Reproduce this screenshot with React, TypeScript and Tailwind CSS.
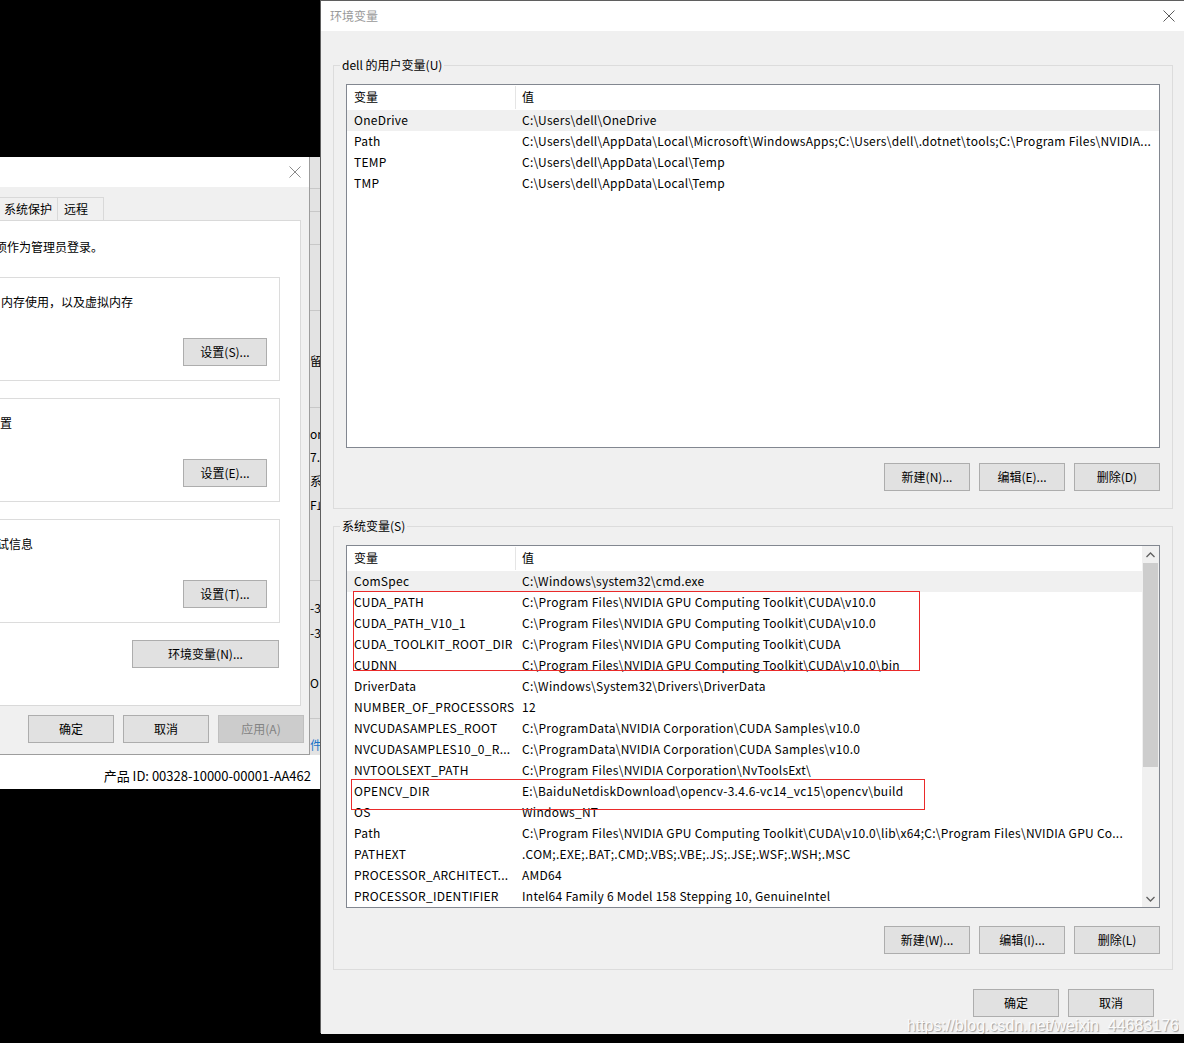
import React from 'react';

type Row = [string, string];

const userVars: Row[] = [
  ['OneDrive', 'C:\\Users\\dell\\OneDrive'],
  ['Path', 'C:\\Users\\dell\\AppData\\Local\\Microsoft\\WindowsApps;C:\\Users\\dell\\.dotnet\\tools;C:\\Program Files\\NVIDIA...'],
  ['TEMP', 'C:\\Users\\dell\\AppData\\Local\\Temp'],
  ['TMP', 'C:\\Users\\dell\\AppData\\Local\\Temp'],
];

const sysVars: Row[] = [
  ['ComSpec', 'C:\\Windows\\system32\\cmd.exe'],
  ['CUDA_PATH', 'C:\\Program Files\\NVIDIA GPU Computing Toolkit\\CUDA\\v10.0'],
  ['CUDA_PATH_V10_1', 'C:\\Program Files\\NVIDIA GPU Computing Toolkit\\CUDA\\v10.0'],
  ['CUDA_TOOLKIT_ROOT_DIR', 'C:\\Program Files\\NVIDIA GPU Computing Toolkit\\CUDA'],
  ['CUDNN', 'C:\\Program Files\\NVIDIA GPU Computing Toolkit\\CUDA\\v10.0\\bin'],
  ['DriverData', 'C:\\Windows\\System32\\Drivers\\DriverData'],
  ['NUMBER_OF_PROCESSORS', '12'],
  ['NVCUDASAMPLES_ROOT', 'C:\\ProgramData\\NVIDIA Corporation\\CUDA Samples\\v10.0'],
  ['NVCUDASAMPLES10_0_R...', 'C:\\ProgramData\\NVIDIA Corporation\\CUDA Samples\\v10.0'],
  ['NVTOOLSEXT_PATH', 'C:\\Program Files\\NVIDIA Corporation\\NvToolsExt\\'],
  ['OPENCV_DIR', 'E:\\BaiduNetdiskDownload\\opencv-3.4.6-vc14_vc15\\opencv\\build'],
  ['OS', 'Windows_NT'],
  ['Path', 'C:\\Program Files\\NVIDIA GPU Computing Toolkit\\CUDA\\v10.0\\lib\\x64;C:\\Program Files\\NVIDIA GPU Co...'],
  ['PATHEXT', '.COM;.EXE;.BAT;.CMD;.VBS;.VBE;.JS;.JSE;.WSF;.WSH;.MSC'],
  ['PROCESSOR_ARCHITECT...', 'AMD64'],
  ['PROCESSOR_IDENTIFIER', 'Intel64 Family 6 Model 158 Stepping 10, GenuineIntel'],
];

const CloseX = ({ color }: { color: string }) => (
  <svg width="12" height="12" viewBox="0 0 12 12">
    <path d="M0.5 0.5L11.5 11.5M11.5 0.5L0.5 11.5" stroke={color} strokeWidth="1" fill="none" />
  </svg>
);

const Btn = ({ label, className = '' }: { label: string; className?: string }) => (
  <div className={`w-[86px] h-[28px] flex items-center justify-center border border-[#adadad] bg-[#e1e1e1] ${className}`}>
    {label}
  </div>
);

const Header = () => (
  <div className="flex h-[25px] bg-white shrink-0">
    <div className="w-[168px] pl-[7px] pb-[2px] flex items-center">变量</div>
    <div className="w-[1px] bg-[#e5e5e5] my-[1px]" />
    <div className="flex-1 pl-[6px] pb-[2px] flex items-center">值</div>
  </div>
);

const VarRow = ({ row, selected }: { row: Row; selected: boolean }) => (
  <div className={`flex h-[21px] pb-[2px] items-center whitespace-nowrap tracking-[0.27px] ${selected ? 'bg-[#f0f0f0]' : ''}`}>
    <div className="w-[169px] pl-[7px] overflow-hidden">{row[0]}</div>
    <div className="flex-1 pl-[6px] overflow-hidden">{row[1]}</div>
  </div>
);

const Chevron = ({ up }: { up: boolean }) => (
  <svg width="9" height="6" viewBox="0 0 9 6">
    <path d={up ? 'M0.5 5L4.5 1L8.5 5' : 'M0.5 1L4.5 5L8.5 1'} stroke="#606060" strokeWidth="1.3" fill="none" />
  </svg>
);

// the grey sliver of the window that sits behind 系统属性
const BehindStrip = () => (
  <div className="w-[10px] bg-[#e3e3e3] flex flex-col overflow-hidden whitespace-nowrap text-[12px] leading-[16px]">
    <div className="h-[32px] border-b border-[#c8c8c8] shrink-0" />
    <div className="h-[23px] border-b border-[#c8c8c8] shrink-0" />
    <div className="h-[33px] border-b border-[#c8c8c8] shrink-0" />
    <div className="h-[66px] border-b border-[#c8c8c8] shrink-0" />
    <div className="h-[42px] shrink-0" />
    <div className="h-[16px] shrink-0">留</div>
    <div className="h-[39px] border-b border-[#c8c8c8] shrink-0" />
    <div className="h-[18px] shrink-0" />
    <div className="h-[16px] shrink-0">or</div>
    <div className="h-[7px] shrink-0" />
    <div className="h-[16px] shrink-0">7.8</div>
    <div className="h-[8px] shrink-0" />
    <div className="h-[16px] shrink-0">系</div>
    <div className="h-[8px] shrink-0" />
    <div className="h-[16px] shrink-0">F止</div>
    <div className="h-[68px] border-b border-[#c8c8c8] shrink-0" />
    <div className="h-[19px] shrink-0" />
    <div className="h-[16px] shrink-0">-3</div>
    <div className="h-[9px] shrink-0" />
    <div className="h-[16px] shrink-0">-3</div>
    <div className="h-[34px] shrink-0" />
    <div className="h-[16px] shrink-0">O</div>
    <div className="h-[28px] border-b border-[#c8c8c8] shrink-0" />
    <div className="h-[18px] shrink-0" />
    <div className="h-[16px] shrink-0 text-[#1a73c8]">件</div>
  </div>
);

const SettingBox = ({ text, label, textClass }: { text: string; label: string; textClass: string }) => (
  <div className="w-[280px] h-[104px] border border-l-0 border-[#dcdcdc] flex flex-col shrink-0">
    <div className={`mt-[16px] leading-[16px] whitespace-nowrap ${textClass}`}>{text}</div>
    <div className="flex justify-end pr-[12px] mt-[28px]">
      <div className="w-[84px] h-[28px] flex items-center justify-center border border-[#adadad] bg-[#e1e1e1]">{label}</div>
    </div>
  </div>
);

const SystemProps = () => (
  <div className="w-[310px] flex flex-col border-r border-b border-[#9d9d9d]">
    <div className="h-[30px] bg-white flex items-center justify-end pr-[8px] shrink-0">
      <CloseX color="#8a8a8a" />
    </div>
    <div className="flex-1 bg-[#f0f0f0] flex flex-col">
      <div className="flex h-[23px] mt-[10px]">
        <div className="w-[58px] border-t border-r border-[#d9d9d9] pl-[4px] flex items-center">系统保护</div>
        <div className="w-[46px] border-t border-r border-[#d9d9d9] pl-[6px] flex items-center">远程</div>
      </div>
      <div className="w-[301px] h-[486px] bg-white border border-l-0 border-[#d9d9d9] flex flex-col overflow-hidden">
        <div className="mt-[18px] leading-[16px] -ml-[5px] whitespace-nowrap">须作为管理员登录。</div>
        <div className="mt-[22px] flex flex-col gap-[17px]">
          <SettingBox text="内存使用，以及虚拟内存" label="设置(S)..." textClass="pl-[1px]" />
          <SettingBox text="置" label="设置(E)..." textClass="pl-0" />
          <SettingBox text="试信息" label="设置(T)..." textClass="-ml-[3px]" />
        </div>
        <div className="flex mt-[17px] pl-[132px]">
          <div className="w-[147px] h-[28px] flex items-center justify-center border border-[#adadad] bg-[#e1e1e1]">环境变量(N)...</div>
        </div>
      </div>
      <div className="flex gap-[9px] pl-[28px] mt-[9px]">
        <Btn label="确定" />
        <Btn label="取消" />
        <Btn label="应用(A)" className="!bg-[#cccccc] !border-[#bfbfbf] text-[#838383]" />
      </div>
    </div>
  </div>
);

const EnvDialog = () => (
  <div className="w-[864px] flex flex-col border-l border-t border-[#5f5f5f]">
    <div className="h-[30px] bg-white flex items-center justify-between pl-[9px] pr-[9px] shrink-0">
      <span className="text-[#999999]">环境变量</span>
      <CloseX color="#5a5a5a" />
    </div>
    <div className="flex-1 bg-[#f0f0f0] flex flex-col pl-[12px] pr-[11px] pt-[26px]">
      <fieldset className="border border-[#dcdcdc] pl-[12px] pr-[12px] pb-[17px]">
        <legend className="-ml-[6px] px-[2px] leading-[16px]">dell 的用户变量(U)</legend>
        <div className="mt-[11px] h-[364px] border border-[#828790] bg-white flex flex-col">
          <Header />
          {userVars.map((r, i) => (
            <VarRow key={r[0]} row={r} selected={i === 0} />
          ))}
        </div>
        <div className="flex justify-end gap-[9px] mt-[15px]">
          <Btn label="新建(N)..." />
          <Btn label="编辑(E)..." />
          <Btn label="删除(D)" />
        </div>
      </fieldset>

      <fieldset className="mt-[9px] border border-[#dcdcdc] pl-[12px] pr-[12px] pb-[15px]">
        <legend className="-ml-[6px] px-[2px] leading-[16px]">系统变量(S)</legend>
        <div className="mt-[11px] h-[363px] border border-[#828790] bg-white flex">
          <div className="flex-1 flex flex-col relative">
            <Header />
            {sysVars.map((r, i) => (
              <VarRow key={r[0] + i} row={r} selected={i === 0} />
            ))}
            <div className="absolute left-[6px] top-[45px] w-[567px] h-[80px] border border-[#ea2a2a]" />
            <div className="absolute left-[4px] top-[233px] w-[574px] h-[31px] border border-[#ea2a2a]" />
          </div>
          <div className="w-[17px] bg-[#f0f0f0] flex flex-col">
            <div className="h-[17px] flex items-center justify-center">
              <Chevron up />
            </div>
            <div className="h-[204px] bg-[#cdcdcd] mx-[1px]" />
            <div className="flex-1" />
            <div className="h-[17px] flex items-center justify-center">
              <Chevron up={false} />
            </div>
          </div>
        </div>
        <div className="flex justify-end gap-[9px] mt-[18px]">
          <Btn label="新建(W)..." />
          <Btn label="编辑(I)..." />
          <Btn label="删除(L)" />
        </div>
      </fieldset>

      <div className="flex justify-end gap-[9px] mt-[19px] pr-[19px]">
        <Btn label="确定" />
        <Btn label="取消" />
      </div>
      <div className="flex-1 flex items-end justify-end -mr-[6px] overflow-hidden">
        <span className="font-['Liberation_Sans',sans-serif] text-[16px] leading-[17px] text-[#fbfbfb] [text-shadow:1px_1px_1px_#9a9a9a]">
          https://blog.csdn.net/weixin_44683176
        </span>
      </div>
    </div>
  </div>
);

export default function App() {
  return (
    <div className="w-[1184px] h-[1043px] bg-black flex flex-col overflow-hidden font-['Noto_Sans_CJK_SC',sans-serif] text-[12px] text-black">
      <div className="flex h-[1033px] shrink-0">
        <div className="w-[320px] flex flex-col">
          <div className="h-[157px] shrink-0" />
          <div className="flex h-[598px] shrink-0">
            <SystemProps />
            <BehindStrip />
          </div>
          <div className="h-[34px] bg-white flex items-start justify-end pt-[13px] pr-[9px] text-[13px] leading-[16px] shrink-0">
            产品 ID: 00328-10000-00001-AA462
          </div>
        </div>
        <EnvDialog />
      </div>
    </div>
  );
}
